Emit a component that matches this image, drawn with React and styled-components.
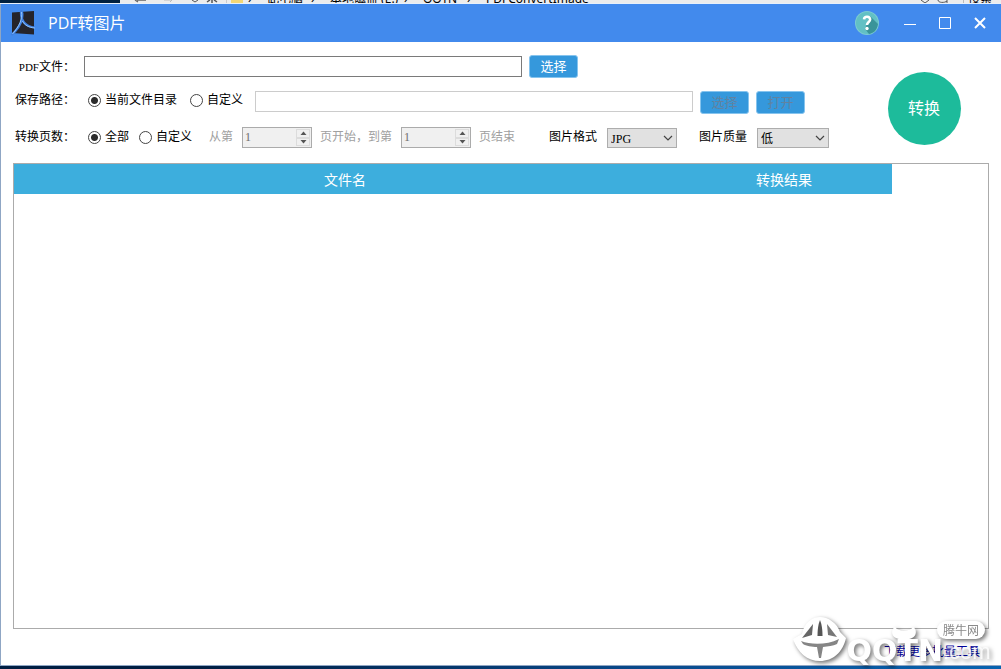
import React, { useState } from "react"; // eslint-disable-line no-unused-vars
import styled, { createGlobalStyle } from "styled-components";

const formats = ["JPG", "PNG", "BMP"];
const qualities = ["低", "中", "高"];

export default function App() {
  const [pathMode, setPathMode] = useState("current");
  const [pageMode, setPageMode] = useState("all");
  const [file, setFile] = useState("");
  const [path, setPath] = useState("");

  const customPath = pathMode === "custom";
  const customPages = pageMode === "custom";

  return (
    <StPage>
      <GlobalStyle />
      <DesktopTop />
      <StWindow>
        <TitleBar />
        <StForm onSubmit={(e) => e.preventDefault()}>
          <StFields>
            <StRow $center>
              <StLabel htmlFor="file">
                <span>PDF</span>文件：
              </StLabel>
              <StTextInput
                id="file"
                type="text"
                value={file}
                onChange={(e) => setFile(e.target.value)}
              />
              <StButton type="button">选择</StButton>
            </StRow>

            <StRow>
              <StLabel htmlFor="path">保存路径：</StLabel>
              <StRadioGroup $gap="13px">
                <Radio
                  name="pathMode"
                  text="当前文件目录"
                  checked={!customPath}
                  onChange={() => setPathMode("current")}
                />
                <Radio
                  name="pathMode"
                  text="自定义"
                  checked={customPath}
                  onChange={() => setPathMode("custom")}
                />
              </StRadioGroup>
              <StTextInput
                id="path"
                type="text"
                value={path}
                disabled={!customPath}
                onChange={(e) => setPath(e.target.value)}
              />
              <StButton type="button" disabled={!customPath}>
                选择
              </StButton>
              <StButton type="button" disabled={!customPath}>
                打开
              </StButton>
            </StRow>

            <StRow $line="20px">
              <StLabel as="span">转换页数：</StLabel>
              <StRadioGroup $gap="10px">
                <Radio
                  name="pageMode"
                  text="全部"
                  checked={!customPages}
                  onChange={() => setPageMode("all")}
                />
                <Radio
                  name="pageMode"
                  text="自定义"
                  checked={customPages}
                  onChange={() => setPageMode("custom")}
                />
              </StRadioGroup>
              <StRange $disabled={!customPages}>
                <label htmlFor="from">从第</label>
                <Spinner id="from" disabled={!customPages} />
                <label htmlFor="to">页开始，到第</label>
                <Spinner id="to" disabled={!customPages} />
                <span>页结束</span>
              </StRange>
              <Select id="format" label="图片格式" options={formats} />
              <Select id="quality" label="图片质量" options={qualities} wide />
            </StRow>
          </StFields>
          <StConvert type="submit">转换</StConvert>
        </StForm>

        <StPanel>
          <StTable>
            <thead>
              <tr>
                <StTh $width="662px">文件名</StTh>
                <StTh>转换结果</StTh>
              </tr>
            </thead>
          </StTable>
        </StPanel>

        <StFooter>
          <a href="#more">下载更多批量工具</a>
          <Watermark />
        </StFooter>
      </StWindow>
      <StDesktopBottom />
    </StPage>
  );
}

// the bit of the explorer window that shows above the app
function DesktopTop() {
  return (
    <StDesktopTop>
      <StExplorer>
        <svg width="128" height="3" viewBox="0 0 128 3" fill="none">
          <path d="M15 0l3 2M17 0h9" stroke="#666" strokeWidth="1.3" />
          <path d="M44 0h8M50 2l2 -2" stroke="#bbb" />
          <path d="M72 0l3 2 3 -2" stroke="#555" />
          <path d="M92 0v3M87 2l3 -2M97 2l-3 -2" stroke="#555" strokeWidth="1.5" />
          <path d="M106.500 0v3" stroke="#ccc" />
          <path d="M111 0h12v3h-12z" fill="#f2d675" />
        </svg>
        <StCrumb $width="19px">›</StCrumb>
        <StCrumb $width="44px">此电脑</StCrumb>
        <StCrumb $width="19px">›</StCrumb>
        <StCrumb $width="74px">本地磁盘 (E:)</StCrumb>
        <StCrumb $width="19px">›</StCrumb>
        <StCrumb $width="44px">QQTN</StCrumb>
        <StCrumb $width="19px">›</StCrumb>
        <StCrumb>PDFConvertImage</StCrumb>
        <StSearch>
          <svg width="48" height="3" viewBox="0 0 48 3" fill="none">
            <path d="M1 0l4 3 4 -3M18 0c0 3 7 3 9 1M27 0v3" stroke="#555" />
            <path d="M43.500 0v3" stroke="#bbb" />
          </svg>
          <StCrumb>搜索</StCrumb>
        </StSearch>
      </StExplorer>
    </StDesktopTop>
  );
}

function TitleBar() {
  return (
    <StTitleBar>
      <svg width="26" height="26" viewBox="0 0 26 26" fill="none">
        <path d="M2 2.500L24 1v23.500L2 23z" fill="#25242b" />
        <path
          d="M10.500 1C13 1 12.500 5 12 9c-1 5 -5 11 -10.500 16M11 2c-.5 8 4 15 14 15.500"
          stroke="#3f7fe0"
          strokeWidth="2.200"
        />
        <path
          d="M11.500 2c1 7 -2 14 -9 22M12.500 11c2 4 6 6.500 12.500 7"
          stroke="#9accff"
          strokeWidth="0.900"
        />
      </svg>
      <h1>PDF转图片</h1>
      <StHelp type="button" aria-label="帮助">
        <svg width="26" height="26" viewBox="0 0 26 26" fill="none">
          <circle cx="13" cy="13" r="12" fill="#7ccbd0" />
          <circle cx="13" cy="13" r="11" fill="#62c0c4" />
          <path d="M16 6l8 8c-1 6 -4 9 -9 10l-4 -5z" fill="#3a9499" />
          <path
            d="M10 9.300c.4 -3.600 6.300 -3.400 6.100 .3c-.2 2.400 -3 2.400 -3.100 5.400"
            stroke="#fff"
            strokeWidth="2.600"
          />
          <circle cx="13" cy="18.500" r="1.700" fill="#fff" />
        </svg>
      </StHelp>
      <StWinButton type="button" aria-label="最小化">
        <svg width="14" height="14" viewBox="0 0 14 14" stroke="#fff">
          <path d="M1 8.500h12" />
        </svg>
      </StWinButton>
      <StWinButton type="button" aria-label="最大化">
        <svg width="14" height="14" viewBox="0 0 14 14" stroke="#fff" fill="none">
          <path d="M1.500 1.500h11v11h-11z" />
        </svg>
      </StWinButton>
      <StWinButton type="button" aria-label="关闭">
        <svg width="14" height="14" viewBox="0 0 14 14" stroke="#fff" strokeWidth="2">
          <path d="M2 2l10 10M12 2L2 12" />
        </svg>
      </StWinButton>
    </StTitleBar>
  );
}

function Radio({ text, ...rest }) {
  return (
    <StRadio>
      <input type="radio" {...rest} />
      {text}
    </StRadio>
  );
}

function Spinner({ id, disabled }) {
  const [value, setValue] = useState(1);

  return (
    <StSpinner>
      <input
        id={id}
        type="number"
        min="1"
        value={value}
        disabled={disabled}
        onChange={(e) => setValue(Number(e.target.value))}
      />
      <div>
        <button
          type="button"
          aria-label="增加"
          disabled={disabled}
          onClick={() => setValue(value + 1)}
        >
          <svg width="7" height="4" viewBox="0 0 7 4">
            <path d="M0.500 4l3 -3.500 3 3.500z" fill="#555" />
          </svg>
        </button>
        <button
          type="button"
          aria-label="减少"
          disabled={disabled}
          onClick={() => setValue(Math.max(1, value - 1))}
        >
          <svg width="7" height="4" viewBox="0 0 7 4">
            <path d="M0.500 0l3 3.500 3 -3.500z" fill="#555" />
          </svg>
        </button>
      </div>
    </StSpinner>
  );
}

function Select({ id, label, options, wide }) {
  return (
    <StSelect $wide={wide}>
      <label htmlFor={id}>{label}</label>
      <div>
        <select id={id}>
          {options.map((item) => (
            <option key={item}>{item}</option>
          ))}
        </select>
        <svg width="10" height="6" viewBox="0 0 10 6" fill="none">
          <path d="M1 1l4 4 4 -4" stroke="#444" strokeWidth="1.200" />
        </svg>
      </div>
    </StSelect>
  );
}

function Watermark() {
  return (
    <StWatermark>
      <svg width="58" height="50" viewBox="0 0 58 50">
        <path
          d="M1 24L10 19C12 8 20 2 28 2s17 6 20 15l6 6c-3 14 -13 23 -26 23S6 38 1 24z"
          fill="#fff"
        />
        <path d="M28 5c2 5 2.500 10 2.500 16h-5c0 -6 .5 -11 2.500 -16z" fill="#555" />
        <path d="M21 9L10 23l10 -3z" fill="#666" />
        <path d="M35 9l10 13 -9 -2z" fill="#777" />
        <path
          d="M9 26c10 4 26 4 38 -2l-2 5c-4 2 -9 2 -14 3l-2 11h-2l-2 -11c-5 0 -11 -1 -14 -3z"
          fill="#858585"
        />
      </svg>
      <StName>
        <svg width="36" height="16" viewBox="0 0 36 16">
          <path
            d="M8 2c3 5 15 5 18 0c4 2 4 9 -1 11c-5 2 -11 2 -16 0c-5 -2 -5 -9 -1 -11z"
            fill="#fff"
          />
        </svg>
        <strong>QQTN</strong>
      </StName>
      <StSuffix>
        <small>腾牛网</small>
        <em>.com</em>
      </StSuffix>
    </StWatermark>
  );
}

const GlobalStyle = createGlobalStyle`
  * {
    box-sizing: border-box;
  }
  body {
    margin: 0;
    font: 12px/18px "Liberation Serif", "Noto Sans CJK SC", sans-serif;
    color: #000;
  }
  button,
  input,
  select {
    font: inherit;
    margin: 0;
  }
  svg {
    display: block;
    flex: none;
  }
`;

const StPage = styled.div`
  display: flex;
  flex-direction: column;
  min-height: 100vh;
`;

const StDesktopTop = styled.div`
  height: 4px;
  background: #00203f;
  padding-left: 120px;
  border-bottom: 1px solid #e8f0fa;
  overflow: hidden;
`;

const StExplorer = styled.div`
  display: flex;
  align-items: flex-end;
  height: 3px;
  background: #ececec;
`;

const StCrumb = styled.span`
  flex: none;
  width: ${({ $width }) => $width || "auto"};
  margin-bottom: -4px;
  font: 12px/16px "Noto Sans", "Noto Sans CJK SC", sans-serif;
  white-space: nowrap;
`;

const StSearch = styled.div`
  display: flex;
  align-items: flex-end;
  margin-left: auto;
  padding-right: 9px;
`;

const StDesktopBottom = styled.div`
  height: 3px;
  background: linear-gradient(90deg, #001e42 20%, #0a4a8c 65%, #0863b0);
`;

const StWindow = styled.div`
  flex: 1;
  display: flex;
  flex-direction: column;
  background: #fff;
  border-left: 1px solid #8fa6c4;
  border-bottom: 1px solid #8fa6c4;
`;

const StTitleBar = styled.header`
  display: flex;
  align-items: center;
  height: 38px;
  padding: 0 10px 0 9px;
  background: #428aed;
  color: #fff;
  h1 {
    flex: 1;
    margin: 0 0 0 12px;
    font: 400 16px/24px "Open Sans", "Noto Sans CJK SC", sans-serif;
  }
`;

const StHelp = styled.button`
  padding: 0;
  margin-right: 12px;
  border: none;
  background: none;
  cursor: pointer;
`;

const StWinButton = styled.button`
  display: flex;
  justify-content: center;
  width: 35px;
  padding: 0;
  border: none;
  background: none;
  cursor: pointer;
  &:last-child {
    width: 22px;
    margin-left: 7px;
  }
`;

const StForm = styled.form`
  display: flex;
  justify-content: space-between;
  align-items: flex-start;
  padding: 13px 40px 12px 14px;
`;

const StFields = styled.div`
  flex: 1;
  min-width: 0;
  display: flex;
  flex-direction: column;
  gap: 12px;
`;

const StRow = styled.div`
  display: flex;
  align-items: ${({ $center }) => ($center ? "center" : "flex-start")};
  height: 24px;
  padding-bottom: 1px;
  line-height: ${({ $line }) => $line || "18px"};
  white-space: nowrap;
`;

const StLabel = styled.label`
  width: 60px;
  margin-right: 9px;
  text-align: right;
  span {
    font-size: 11px;
  }
`;

const StTextInput = styled.input`
  flex: 0 1 438px;
  min-width: 80px;
  height: 21px;
  padding: 0 4px;
  border: 1px solid #7a7a7a;
  background: #fff;
  &:disabled {
    border-color: #ccc;
  }
`;

const StButton = styled.button`
  flex: none;
  width: 49px;
  height: 23px;
  margin-left: 7px;
  padding: 0 0 2px;
  border: 1px solid #86c4ee;
  border-radius: 3px;
  background: #3598dc;
  color: #fff;
  font: 13px/18px "Noto Sans CJK SC", sans-serif;
  cursor: pointer;
  &:disabled {
    color: #6182a0;
    cursor: default;
  }
`;

const StRadioGroup = styled.div`
  display: flex;
  gap: ${({ $gap }) => $gap};
  margin-right: 12px;
  padding-left: 4px;
`;

const StRadio = styled.label`
  display: flex;
  align-items: center;
  gap: 4px;
  input {
    appearance: none;
    width: 13px;
    height: 13px;
    border: 1px solid #444;
    border-radius: 50%;
    background: #fff;
  }
  input:checked {
    background: radial-gradient(circle, #2b2b2b 3px, #fff 4px);
  }
`;

const StRange = styled.div`
  display: flex;
  gap: 8px;
  margin-left: 5px;
  margin-right: 12px;
  color: ${({ $disabled }) => ($disabled ? "#a0a0a0" : "#000")};
`;

const StSpinner = styled.div`
  display: flex;
  width: 70px;
  height: 21px;
  margin-left: 1px;
  border: 1px solid #ababab;
  background: #f0f0f0;
  input {
    flex: 1;
    min-width: 0;
    height: 17px;
    padding: 0 2px;
    border: none;
    background: none;
    color: #6d6d6d;
    appearance: textfield;
  }
  input::-webkit-inner-spin-button {
    appearance: none;
    margin: 0;
  }
  div {
    display: flex;
    flex-direction: column;
    width: 15px;
    padding: 1px 1px 1px 0;
  }
  button {
    flex: 1;
    display: flex;
    align-items: center;
    justify-content: center;
    padding: 0;
    border: 1px solid #dcdcdc;
    background: #f0f0f0;
  }
`;

const StSelect = styled.div`
  display: flex;
  gap: 10px;
  margin-left: 22px;
  div {
    position: relative;
    margin-top: 1px;
  }
  select {
    appearance: none;
    display: block;
    width: ${({ $wide }) => ($wide ? "72px" : "70px")};
    height: 20px;
    padding: 0 18px 0 3px;
    border: 1px solid #adadad;
    border-radius: 0;
    background: #e1e1e1;
    color: #000;
  }
  svg {
    position: absolute;
    right: 4px;
    top: 7px;
    pointer-events: none;
  }
`;

const StConvert = styled.button`
  flex: none;
  width: 73px;
  height: 73px;
  margin-top: 17px;
  padding: 0 1px 4px 0;
  border: none;
  border-radius: 50%;
  background: #1dbb9b;
  color: #fff;
  font: 400 16px/24px "Noto Sans CJK SC", sans-serif;
  cursor: pointer;
`;

const StPanel = styled.main`
  flex: 1;
  margin: 0 12px;
  border: 1px solid #ababab;
`;

const StTable = styled.table`
  width: 878px;
  max-width: 100%;
  border-collapse: collapse;
  table-layout: fixed;
`;

const StTh = styled.th`
  width: ${({ $width }) => $width || "auto"};
  height: 30px;
  padding: 0;
  background: #3daedd;
  color: #fff;
  font: 14px/20px "Noto Sans CJK SC", sans-serif;
`;

const StFooter = styled.footer`
  position: relative;
  display: flex;
  justify-content: flex-end;
  height: 36px;
  padding: 14px 21px 0 0;
  a {
    color: #00009c;
    text-decoration: none;
  }
`;

const StWatermark = styled.div`
  position: absolute;
  right: 0;
  bottom: 0;
  display: flex;
  align-items: flex-end;
  color: #fff;
  pointer-events: none;
  filter: drop-shadow(2px 2px 2px rgba(0, 0, 0, 0.55));
`;

const StName = styled.div`
  display: flex;
  flex-direction: column;
  margin-left: -4px;
  svg {
    align-self: flex-end;
    margin: 0 20px -4px 0;
  }
  strong {
    font: bold 30px/28px "DejaVu Sans", sans-serif;
  }
`;

const StSuffix = styled.div`
  display: flex;
  flex-direction: column;
  width: 58px;
  small {
    align-self: flex-start;
    padding: 0 6px;
    margin-left: -6px;
    border-radius: 9px;
    background: #fff;
    color: #8a8a8a;
    font: 12px/18px "Noto Sans CJK SC", sans-serif;
  }
  em {
    font: 22px/26px "Liberation Sans", sans-serif;
    opacity: 0.8;
  }
`;
